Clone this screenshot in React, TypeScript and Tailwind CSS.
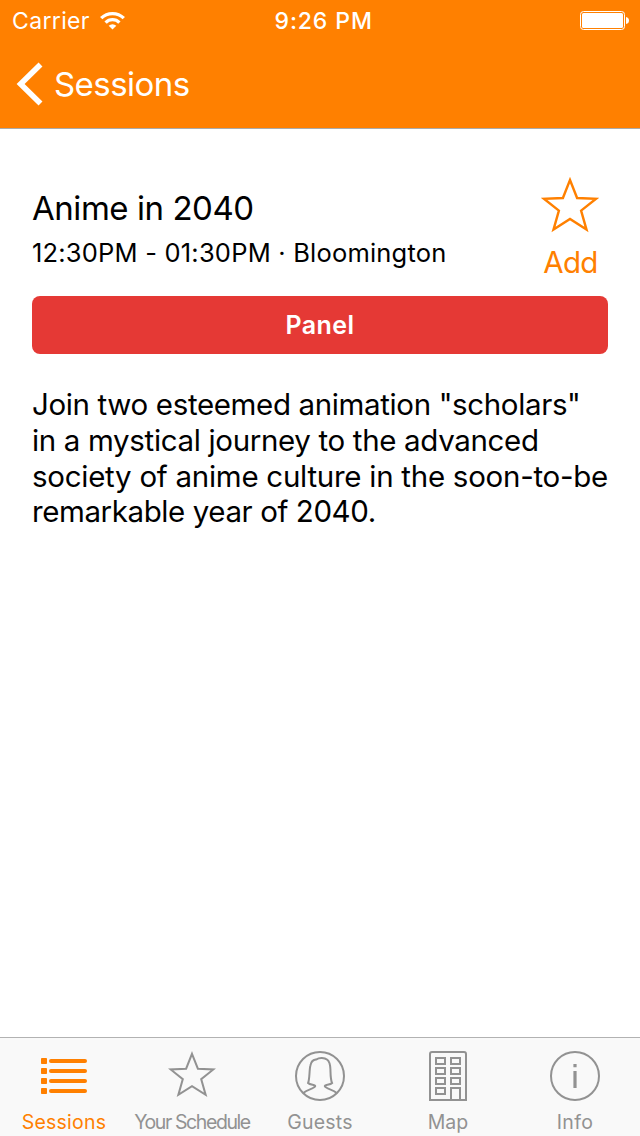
import type { ReactNode } from "react";

const STAR = "M28.5 3 L35.6 21 L54.3 21.9 L39.6 33.6 L45 52.6 L28.5 42 L12 52.6 L17.4 33.6 L2.7 21.9 L21.4 21 Z";

function Star({ className }: { className: string }) {
  return (
    <svg viewBox="-0.5 0 58 56" className={className} fill="none" stroke="currentColor" strokeWidth="2.4">
      <path d={STAR} />
    </svg>
  );
}

function StatusBar() {
  return (
    <div className="flex h-10 items-center justify-between pl-3 pr-[11px]">
      <div className="flex w-[200px] items-center gap-[11px]">
        <span className="w-[77px] whitespace-nowrap pt-0.5 text-[23px] tracking-[0.35px]">Carrier</span>
        <svg viewBox="0 0 26 20" className="h-5 w-[26px]" fill="none" stroke="white" strokeWidth="3.3">
          <path d="M1.2 8.2 A16 16 0 0 1 23.8 8.2" />
          <path d="M5.6 12.6 A9.7 9.7 0 0 1 19.4 12.6" />
          <path d="M8.7 15.7 A5.4 5.4 0 0 1 16.3 15.7 L12.5 19.5 Z" fill="white" stroke="none" />
        </svg>
      </div>
      <span className="ml-1.5 w-[98px] whitespace-nowrap pt-0.5 text-[23px] font-medium tracking-[0.9px]">9:26 PM</span>
      <div className="flex w-[200px] justify-end">
        <svg viewBox="0 0 49 20" className="h-5 w-[49px]">
          <rect x="0.5" y="1.5" width="44" height="18" rx="3" fill="none" stroke="white" />
          <rect x="2" y="3" width="41" height="15" rx="1.5" fill="white" />
          <path d="M46 7 Q49 7.5 49 10.5 Q49 13.5 46 14 Z" fill="white" />
        </svg>
      </div>
    </div>
  );
}

function ListIcon() {
  return (
    <svg viewBox="0 0 52 52" className="size-[52px]" fill="currentColor">
      {[8, 18, 28, 38].map((y) => (
        <g key={y}>
          <rect x="3" y={y} width="6" height="6" rx="0.8" />
          <rect x="11" y={y + 1} width="38" height="4" rx="2" />
        </g>
      ))}
    </svg>
  );
}

function GuestIcon() {
  return (
    <svg viewBox="0 0 52 52" className="size-[52px]" fill="none" stroke="currentColor" strokeWidth="2">
      <circle cx="26" cy="26" r="24" />
      <path d="M9.3 43 C13 39.5 20 39 21.2 36.2 C21.5 34.6 16 35.2 14.1 33 C15.8 29 15.2 20 16.4 15.5 C17.2 11.5 18.8 9.8 22 9.6 C25.5 7.3 30.5 7.6 33.3 9.8 C36 12 36.2 15 36.4 19 C36.6 25 36.5 30 38.1 33 C36.2 35.2 30.5 34.6 30.8 36.2 C32 39 39 39.5 42.7 43" />
    </svg>
  );
}

function BuildingIcon() {
  return (
    <svg viewBox="0 0 52 52" className="size-[52px]" fill="none" stroke="currentColor" strokeWidth="2">
      <path d="M8 50 V4 Q8 2 10 2 H42 Q44 2 44 4 V50 Z" />
      {[8, 18, 28, 38].map((y) => (
        <g key={y}>
          <rect x="14" y={y} width="9" height="6" />
          {y < 38 && <rect x="29" y={y} width="9" height="6" />}
        </g>
      ))}
      <path d="M29 50 V38 H38 V50" />
    </svg>
  );
}

function InfoIcon() {
  return (
    <svg viewBox="0 0 52 52" className="size-[52px]" fill="none" stroke="currentColor" strokeWidth="2">
      <circle cx="26" cy="26" r="24" />
      <path d="M26 14 V17.3 M26 21 V38" strokeWidth="3.2" />
    </svg>
  );
}

function Tab({ icon, label, className }: { icon: ReactNode; label: string; className: string }) {
  return (
    <div className={`flex w-32 flex-col items-center pt-3 ${className}`}>
      {icon}
      <span className="mt-2 whitespace-nowrap text-[19.5px] leading-6">{label}</span>
    </div>
  );
}

export default function App() {
  return (
    <div className="flex h-[1136px] w-[640px] flex-col bg-white font-['Inter',sans-serif] text-black">
      <header className="h-[129px] border-b border-[#aaaaaa] bg-[#ff8000] text-white">
        <StatusBar />
        <div className="flex h-[88px] items-center pl-4">
          <svg viewBox="0 0 28 44" className="h-11 w-7" fill="none" stroke="white" strokeWidth="5.6">
            <path d="M24.5 2.4 L4.6 22 L24.5 41.6" />
          </svg>
          <span className="ml-2.5 whitespace-nowrap pt-px text-[33px] tracking-[-0.55px]">Sessions</span>
        </div>
      </header>

      <main className="flex-1 px-8 pt-12">
        <div className="flex h-[119px] justify-between">
          <div className="pt-2.5">
            <h1 className="whitespace-nowrap text-[33px] leading-[42px] tracking-[-0.45px]">Anime in 2040</h1>
            <p className="mt-2 whitespace-nowrap text-[25.5px] leading-8 tracking-[0.2px]">12:30PM - 01:30PM · Bloomington</p>
          </div>
          <div className="flex w-[76px] flex-col items-center text-[#ff8000]">
            <Star className="h-14 w-[58px]" />
            <span className="mt-[11px] pl-px text-[29.5px] leading-9 tracking-[-0.7px]">Add</span>
          </div>
        </div>
        <div className="flex h-[58px] items-center justify-center rounded-lg bg-[#e53935] text-[25px] font-semibold text-white">
          <span className="pt-0.5 tracking-[0.4px]">Panel</span>
        </div>
        <p className="mt-[33px] whitespace-nowrap text-[29.5px] leading-[35.8px]">
          <span className="block tracking-[-0.36px]">Join two esteemed animation "scholars"</span>
          <span className="block tracking-[-0.34px]">in a mystical journey to the advanced</span>
          <span className="block tracking-[-0.27px]">society of anime culture in the soon-to-be</span>
          <span className="block tracking-[-0.41px]">remarkable year of 2040.</span>
        </p>
      </main>

      <nav className="flex h-[99px] border-t border-[#b2b2b2] bg-[#f9f9f9] text-[#929292]">
        <Tab icon={<ListIcon />} label="Sessions" className="tracking-[0.25px] text-[#ff8000]" />
        <Tab
          icon={
            <span className="flex h-[52px] items-center pb-[3px]">
              <Star className="h-[47px] w-12" />
            </span>
          }
          label="Your Schedule"
          className="tracking-[-1.4px]"
        />
        <Tab icon={<GuestIcon />} label="Guests" className="tracking-[0.2px]" />
        <Tab icon={<BuildingIcon />} label="Map" className="" />
        <Tab icon={<InfoIcon />} label="Info" className="pr-0.5 tracking-[0.4px]" />
      </nav>
    </div>
  );
}
